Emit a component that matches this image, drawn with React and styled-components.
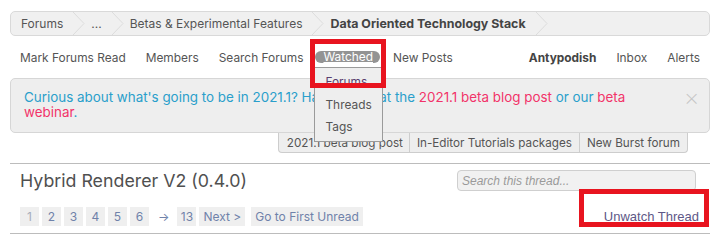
import React from 'react';
import styled, { createGlobalStyle } from 'styled-components';

const GlobalStyle = createGlobalStyle`
  body {
    margin: 0;
    background: #ffffff;
    font-family: Inter, 'Noto Sans', sans-serif;
    color: #555555;
  }
`;

const Page = styled.div`
  width: 700px;
  padding: 11px 16px 0 10px;
`;

const Breadcrumb = styled.div`
  display: flex;
  align-items: stretch;
  height: 23px;
  border: 1px solid #d9d9d9;
  border-radius: 5px;
  background: #f0f0f0;
  font-size: 12px;
`;

const Crumb = styled.div`
  display: flex;
  align-items: center;
  padding: 0 10px 0 ${p => (p.first ? '10px' : '6px')};
  font-size: ${p => (p.current ? '12.4px' : '12px')};
  font-weight: ${p => (p.current ? 700 : 400)};
  color: ${p => (p.current ? '#444' : '#555')};
`;

const Chevron = () => (
  <svg width="12" height="23" viewBox="0 0 12 23" style={{ display: 'block' }}>
    <polyline points="0,0 11,11.5 0,23" fill="none" stroke="#dcdcdc" strokeWidth="1" />
  </svg>
);

const NavBar = styled.div`
  display: flex;
  align-items: center;
  justify-content: space-between;
  height: 42px;
  font-size: 11.9px;
`;

const NavGroup = styled.div`
  display: flex;
  align-items: center;
`;

const NavItem = styled.div`
  position: relative;
  display: flex;
  align-items: center;
  height: 16px;
  padding: 0 10px;
  color: ${p => (p.bold ? '#444' : '#555')};
  font-weight: ${p => (p.bold ? 700 : 400)};
`;

const Pill = styled.span`
  display: block;
  margin: 0 -7px 0 -8px;
  padding: 0 7px 0 8px;
  height: 12px;
  line-height: 12px;
  border-radius: 6px;
  background: #939393;
  color: #fff;
  text-decoration: underline;
`;

const Dropdown = styled.div`
  position: absolute;
  left: 1px;
  top: 18px;
  width: 69px;
  height: 75px;
  background: #eeeeee;
  border: 1px solid #9a9a9a;
  z-index: 2;
  padding-top: 3px;
  box-sizing: border-box;
`;

const DropItem = styled.div`
  height: 22.5px;
  line-height: 22px;
  padding-left: 10px;
  color: ${p => (p.visited ? '#5a3f6e' : '#555')};
`;

const Highlight = styled.div`
  position: absolute;
  border: 5px solid #e8141f;
  box-sizing: border-box;
  pointer-events: none;
  z-index: 3;
`;

const Notice = styled.div`
  position: relative;
  border: 1px solid #d6d6d6;
  border-radius: 5px;
  background: #eeeeee;
  padding: 11px 40px 12px 13px;
  font-size: 13.4px;
  line-height: 15px;
  color: #2a9fcb;
`;

const Pink = styled.span`
  color: #f23369;
`;

const Close = styled.span`
  position: absolute;
  right: 9px;
  top: 10px;
  font-size: 20px;
  line-height: 18px;
  color: #c6c6c6;
  font-family: 'DejaVu Sans', sans-serif;
  font-weight: 300;
`;

const TabsRow = styled.div`
  display: flex;
  justify-content: flex-end;
  padding-right: 22px;
`;

const Tabs = styled.div`
  display: flex;
  height: 19px;
  border: 1px solid #cdcdcd;
  border-top: none;
  border-radius: 0 0 4px 4px;
  background: #eeeeee;
  font-size: 11.7px;
  color: #555;
`;

const Tab = styled.div`
  display: flex;
  align-items: center;
  padding: 0 ${p => (p.first ? '6px 0 8px' : '7px')};
  border-left: ${p => (p.first ? 'none' : '1px solid #cdcdcd')};
`;

const Thread = styled.div`
  margin-top: 10px;
  border-top: 1px solid #bcbcbc;
  border-bottom: 1px solid #bcbcbc;
`;

const TitleRow = styled.div`
  display: flex;
  justify-content: space-between;
  align-items: flex-start;
  padding: 6px 14px 0 10px;
  height: 35px;
  box-sizing: border-box;
`;

const Title = styled.h1`
  margin: 0;
  font-size: 17.8px;
  font-weight: 400;
  line-height: 22px;
  color: #505050;
`;

const Search = styled.input`
  width: 239px;
  height: 21px;
  box-sizing: border-box;
  border: 1px solid #cfcfcf;
  border-radius: 4px;
  background: #f1f1f1;
  padding: 0 4px;
  font-family: 'Liberation Sans', Arial, sans-serif;
  font-size: 12px;
  font-style: italic;
  &::placeholder {
    color: #9a9a9a;
  }
`;

const PageRow = styled.div`
  display: flex;
  justify-content: space-between;
  align-items: center;
  padding: 0 11px 0 10px;
  height: 34px;
`;

const Pager = styled.div`
  display: flex;
  align-items: center;
  gap: 3px;
  font-size: 12px;
`;

const PageLink = styled.span`
  display: flex;
  align-items: center;
  justify-content: center;
  min-width: 19px;
  height: 19px;
  padding: 0 ${p => (p.wide ? '4px' : '0')};
  margin-left: ${p => (p.spaced ? '3px' : '0')};
  box-sizing: border-box;
  background: #efefef;
  color: ${p => (p.current ? '#a6adbb' : '#6f82aa')};
`;

const Arrow = styled.span`
  padding: 0 5px 0 6px;
  color: #6f82aa;
`;

const Unwatch = styled.div`
  position: relative;
  margin-top: 0;
  font-family: 'Liberation Sans', Arial, sans-serif;
  font-size: 13px;
  color: #5e5887;
`;

export default function App() {
  return (
    <>
      <GlobalStyle />
      <Page>
        <Breadcrumb>
          <Crumb first>Forums</Crumb>
          <Chevron />
          <Crumb>...</Crumb>
          <Chevron />
          <Crumb>Betas &amp; Experimental Features</Crumb>
          <Chevron />
          <Crumb current>Data Oriented Technology Stack</Crumb>
          <Chevron />
        </Breadcrumb>

        <NavBar>
          <NavGroup>
            <NavItem>Mark Forums Read</NavItem>
            <NavItem>Members</NavItem>
            <NavItem>Search Forums</NavItem>
            <NavItem>
              <Pill>Watched</Pill>
              <Dropdown>
                <DropItem visited>Forums</DropItem>
                <DropItem>Threads</DropItem>
                <DropItem>Tags</DropItem>
              </Dropdown>
              <Highlight style={{ left: -3, top: -10, width: 76, height: 49 }} />
            </NavItem>
            <NavItem>New Posts</NavItem>
          </NavGroup>
          <NavGroup>
            <NavItem bold>Antypodish</NavItem>
            <NavItem>Inbox</NavItem>
            <NavItem>Alerts</NavItem>
          </NavGroup>
        </NavBar>

        <Notice>
          Curious about what's going to be in 2021.1? Have a look at the <Pink>2021.1 beta blog post</Pink> or our{' '}
          <Pink>beta webinar</Pink>.
          <Close>×</Close>
        </Notice>

        <TabsRow>
          <Tabs>
            <Tab first>2021.1 beta blog post</Tab>
            <Tab>In-Editor Tutorials packages</Tab>
            <Tab>New Burst forum</Tab>
          </Tabs>
        </TabsRow>

        <Thread>
          <TitleRow>
            <Title>Hybrid Renderer V2 (0.4.0)</Title>
            <Search placeholder="Search this thread..." />
          </TitleRow>
          <PageRow>
            <Pager>
              <PageLink current>1</PageLink>
              <PageLink>2</PageLink>
              <PageLink>3</PageLink>
              <PageLink>4</PageLink>
              <PageLink>5</PageLink>
              <PageLink>6</PageLink>
              <Arrow>→</Arrow>
              <PageLink>13</PageLink>
              <PageLink wide>Next &gt;</PageLink>
              <PageLink wide spaced>Go to First Unread</PageLink>
            </Pager>
            <Unwatch>
              Unwatch Thread
              <Highlight style={{ left: -25, top: -20, width: 130, height: 38 }} />
            </Unwatch>
          </PageRow>
        </Thread>
      </Page>
    </>
  );
}
